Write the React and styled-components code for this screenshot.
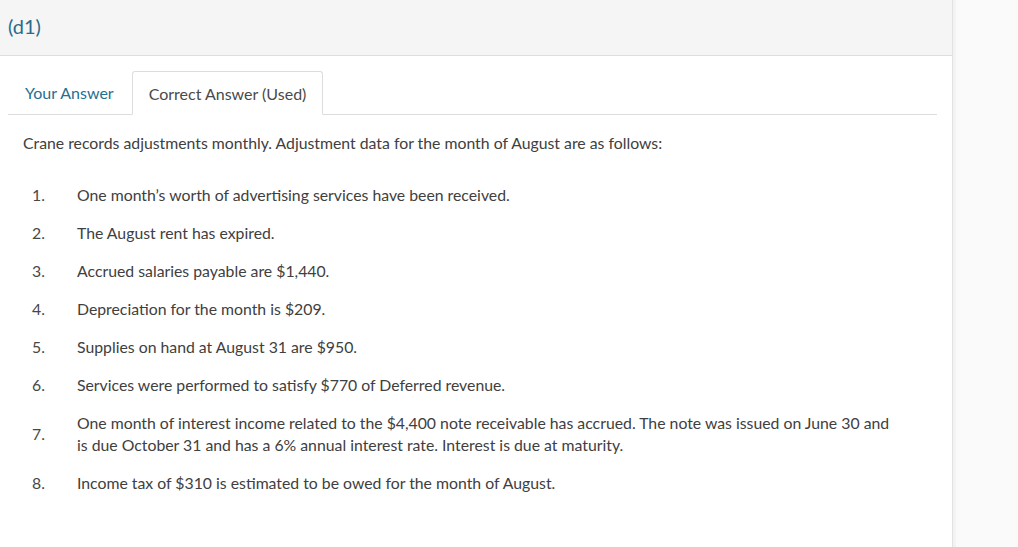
import styled, { createGlobalStyle } from "styled-components"

const GlobalStyle = createGlobalStyle`
  html, body {
    margin: 0;
    padding: 0;
    background: #fafafa;
    font-family: Lato, "Open Sans", sans-serif;
  }
`

const Page = styled.div`
  display: flex;
  height: 547px;
  overflow: hidden;
`

const Main = styled.div`
  width: 952px;
  background: #fff;
  border-right: 1px solid #e2e2e2;
  display: flex;
  flex-direction: column;
`

const Side = styled.div`
  flex: 1;
  background: #fafafa;
  border-left: 3px solid #f3f3f3;
`

const Header = styled.div`
  height: 56px;
  box-sizing: border-box;
  background: #f5f5f5;
  border-bottom: 1px solid #dedede;
  display: flex;
  align-items: center;
  padding: 0 8px 3px;
`

const Title = styled.h2`
  margin: 0;
  font-size: 20px;
  font-weight: 400;
  color: #2b6b8c;
`

const Body = styled.div`
  padding: 15px 15px 0 8px;
`

const Tabs = styled.div`
  display: flex;
  align-items: flex-end;
  gap: 1px;
  height: 43px;
  border-bottom: 1px solid #dddddd;
`

const Tab = styled.button`
  height: ${({ $active }) => ($active ? "44px" : "43px")};
  margin-bottom: ${({ $active }) => ($active ? "-1px" : "0")};
  box-sizing: border-box;
  padding: 0 16px;
  border: 1px solid ${({ $active }) => ($active ? "#dddddd" : "transparent")};
  border-bottom-color: ${({ $active }) => ($active ? "#fff" : "transparent")};
  border-radius: 3px 3px 0 0;
  background: #fff;
  font-family: inherit;
  font-size: 16px;
  color: ${({ $active }) => ($active ? "#4a4a4a" : "#1f7090")};
  cursor: pointer;
`

const Intro = styled.p`
  margin: 17px 0 0 15px;
  font-size: 15.8px;
  line-height: 22px;
  color: #404040;
`

const List = styled.ol`
  list-style: none;
  margin: 30px 0 0 0;
  padding: 0 0 0 24px;
  display: flex;
  flex-direction: column;
  gap: 16px;
`

const Item = styled.li`
  display: grid;
  grid-template-columns: 45px 1fr;
  align-items: center;
  font-size: 15.8px;
  line-height: 22px;
  color: #404040;
`

const Num = styled.span`
  color: #474747;
`

const Text = styled.span`
  max-width: 824px;
`

const items = [
  "One month’s worth of advertising services have been received.",
  "The August rent has expired.",
  "Accrued salaries payable are $1,440.",
  "Depreciation for the month is $209.",
  "Supplies on hand at August 31 are $950.",
  "Services were performed to satisfy $770 of Deferred revenue.",
  "One month of interest income related to the $4,400 note receivable has accrued. The note was issued on June 30 and is due October 31 and has a 6% annual interest rate. Interest is due at maturity.",
  "Income tax of $310 is estimated to be owed for the month of August.",
]

export default function App() {
  return (
    <>
      <GlobalStyle />
      <Page>
        <Main>
          <Header>
            <Title>(d1)</Title>
          </Header>
          <Body>
            <Tabs>
              <Tab>Your Answer</Tab>
              <Tab $active>Correct Answer (Used)</Tab>
            </Tabs>
            <Intro>
              Crane records adjustments monthly. Adjustment data for the month of August are as follows:
            </Intro>
            <List>
              {items.map((t, i) => (
                <Item key={i}>
                  <Num>{i + 1}.</Num>
                  <Text>{t}</Text>
                </Item>
              ))}
            </List>
          </Body>
        </Main>
        <Side />
      </Page>
    </>
  )
}
